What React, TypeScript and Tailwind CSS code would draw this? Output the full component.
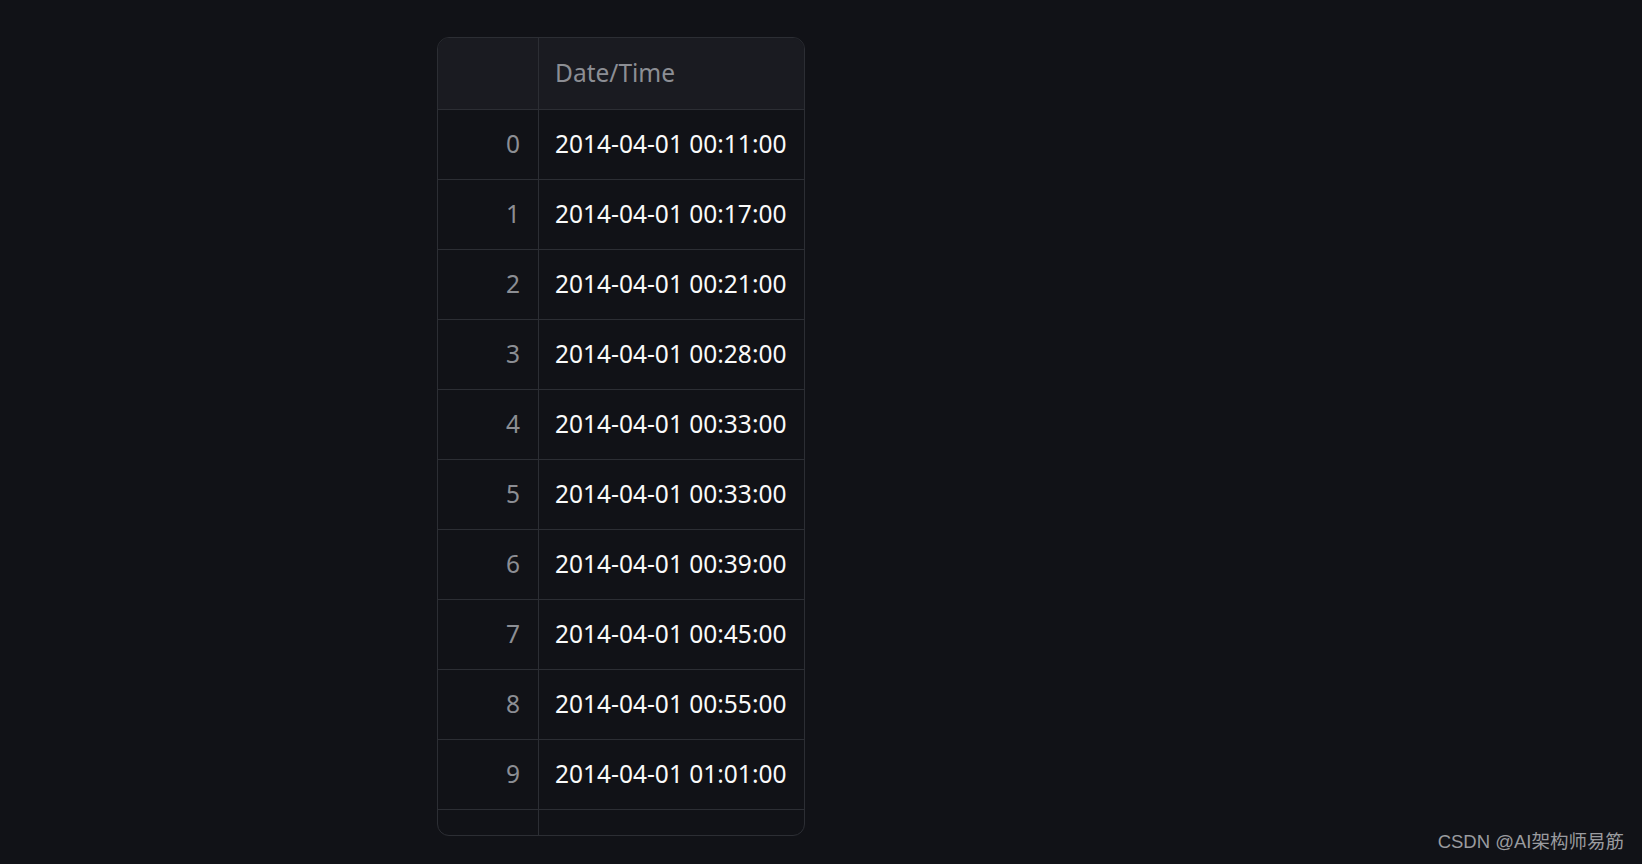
const rows = [
  '2014-04-01 00:11:00',
  '2014-04-01 00:17:00',
  '2014-04-01 00:21:00',
  '2014-04-01 00:28:00',
  '2014-04-01 00:33:00',
  '2014-04-01 00:33:00',
  '2014-04-01 00:39:00',
  '2014-04-01 00:45:00',
  '2014-04-01 00:55:00',
  '2014-04-01 01:01:00',
];

export default function App() {
  return (
    <div
      className="relative w-[1642px] h-[864px] bg-[#111217] pl-[437px] pt-[37px]"
      style={{ fontFamily: '"Noto Sans", "Noto Sans CJK SC", sans-serif' }}
    >
      <div className="w-[368px] border border-[#2c2e34] rounded-[12px] overflow-hidden">
        {/* header */}
        <div className="grid grid-cols-[101px_1fr] h-[72px] bg-[#1a1b21] border-b border-[#2c2e34]">
          <div className="border-r border-[#2c2e34]" />
          <div className="flex items-center pl-[16px] text-[24.5px] text-[#8c8e94]">
            Date/Time
          </div>
        </div>

        {rows.map((d, i) => (
          <div key={i} className="grid grid-cols-[101px_1fr] h-[70px] border-b border-[#2c2e34]">
            <div className="flex items-center justify-end pr-[18px] border-r border-[#2c2e34] text-[24.5px] text-[#8c8e94]">
              {i}
            </div>
            <div className="flex items-center pl-[16px] text-[24.5px] text-[#fafafa]">
              {d}
            </div>
          </div>
        ))}

        <div className="grid grid-cols-[101px_1fr] h-[25px]">
          <div className="border-r border-[#2c2e34]" />
          <div />
        </div>
      </div>

      <div
        className="absolute right-[18px] bottom-[8px] text-[18.5px] text-[#9a9b9f]"
        style={{ fontFamily: '"Liberation Sans", "Noto Sans CJK SC", sans-serif' }}
      >
        CSDN @AI架构师易筋
      </div>
    </div>
  );
}
